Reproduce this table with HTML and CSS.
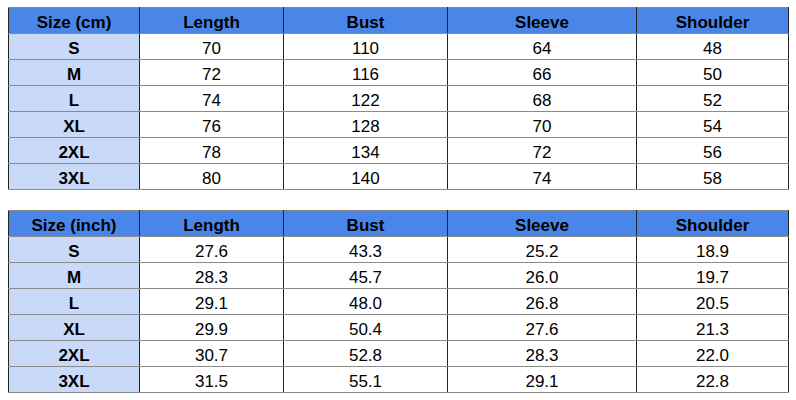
FILE: index.html
```html
<!DOCTYPE html>
<html>
<head>
<meta charset="utf-8">
<link rel="stylesheet" href="styles.css">
</head>
<body>
<div class="page">
<table class="sz">
<colgroup><col class="c1"><col class="c2"><col class="c3"><col class="c4"><col class="c5"></colgroup>
<tr class="hd"><th>Size (cm)</th><th>Length</th><th>Bust</th><th>Sleeve</th><th>Shoulder</th></tr>
<tr><th>S</th><td>70</td><td>110</td><td>64</td><td>48</td></tr>
<tr><th>M</th><td>72</td><td>116</td><td>66</td><td>50</td></tr>
<tr><th>L</th><td>74</td><td>122</td><td>68</td><td>52</td></tr>
<tr><th>XL</th><td>76</td><td>128</td><td>70</td><td>54</td></tr>
<tr><th>2XL</th><td>78</td><td>134</td><td>72</td><td>56</td></tr>
<tr><th>3XL</th><td>80</td><td>140</td><td>74</td><td>58</td></tr>
</table>
<table class="sz">
<colgroup><col class="c1"><col class="c2"><col class="c3"><col class="c4"><col class="c5"></colgroup>
<tr class="hd"><th>Size (inch)</th><th>Length</th><th>Bust</th><th>Sleeve</th><th>Shoulder</th></tr>
<tr><th>S</th><td>27.6</td><td>43.3</td><td>25.2</td><td>18.9</td></tr>
<tr><th>M</th><td>28.3</td><td>45.7</td><td>26.0</td><td>19.7</td></tr>
<tr><th>L</th><td>29.1</td><td>48.0</td><td>26.8</td><td>20.5</td></tr>
<tr><th>XL</th><td>29.9</td><td>50.4</td><td>27.6</td><td>21.3</td></tr>
<tr><th>2XL</th><td>30.7</td><td>52.8</td><td>28.3</td><td>22.0</td></tr>
<tr><th>3XL</th><td>31.5</td><td>55.1</td><td>29.1</td><td>22.8</td></tr>
</table>
</div>
</body>
</html>
```
FILE: styles.css
```css
html, body { margin: 0; padding: 0; background: #fff; }
.page {
  padding: 7px 0 0 8px;
  display: flex;
  flex-direction: column;
  gap: 20px;
  font-family: "Liberation Sans", Arial, sans-serif;
  color: #000;
}
.sz {
  border-collapse: collapse;
  table-layout: fixed;
  width: 780px;
  font-size: 17px;
}
.c1 { width: 131px; }
.c2 { width: 144px; }
.c3 { width: 164px; }
.c4 { width: 189px; }
.c5 { width: 152px; }
.sz th, .sz td {
  height: 26px;
  padding: 3px 0 0;
  text-align: center;
  vertical-align: middle;
  border-left: 1px solid #222;
  border-right: 1px solid #222;
  border-top: 1px solid #8a8a8a;
  border-bottom: 1px solid #8a8a8a;
  box-sizing: border-box;
  line-height: 19px;
}
.sz td { font-weight: normal; }
.sz th { font-weight: bold; background: #c9daf8; }
.sz .hd th { background: #4a86e8; }
```
